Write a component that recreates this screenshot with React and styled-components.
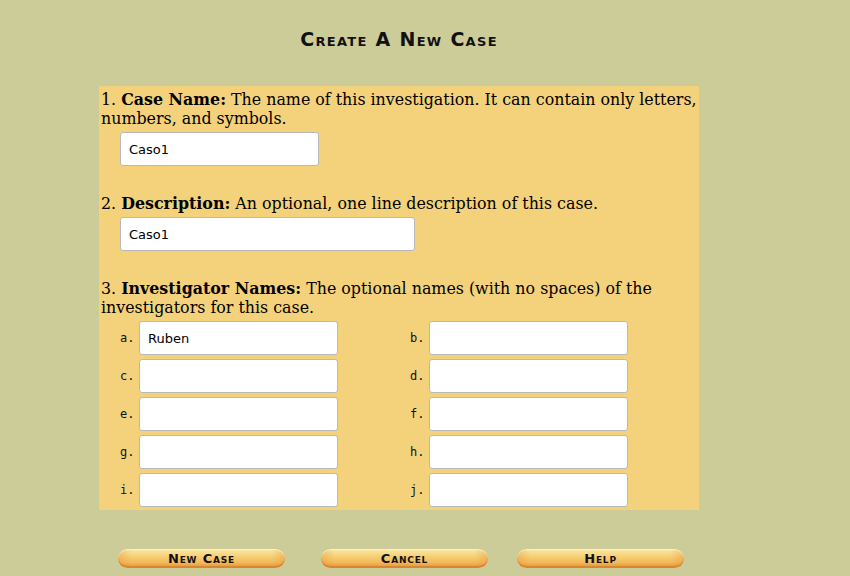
import React from 'react'
import styled, { createGlobalStyle } from 'styled-components'

const GlobalStyle = createGlobalStyle`
  html, body {
    margin: 0;
    padding: 0;
    background: #cccc99;
  }
  body {
    font-family: 'DejaVu Serif', serif;
  }
`

const Page = styled.div`
  width: 600px;
  margin-left: 99px;
  padding-top: 28px;
`

const Title = styled.h1`
  margin: 0 0 36px;
  text-align: center;
  font-family: 'DejaVu Sans', sans-serif;
  font-variant: small-caps;
  font-weight: bold;
  font-size: 19px;
  line-height: 22px;
  letter-spacing: 1.3px;
  color: #111;
`

const Panel = styled.div`
  background: #f4d27c;
  padding: 4px 0 3px 2px;
  font-size: 15.85px;
  line-height: 19px;
  color: #000;
`

const Section = styled.div`
  margin-bottom: ${p => p.gap || 0}px;
`

const Question = styled.p`
  margin: 0;
`

const Field = styled.input`
  display: block;
  box-sizing: border-box;
  width: ${p => p.w}px;
  height: 34px;
  margin: 4px 0 0 19px;
  padding: 0 8px;
  border: 1px solid #b9b9b9;
  border-radius: 3px;
  background: #fff;
  font-family: 'DejaVu Sans', sans-serif;
  font-size: 13px;
  color: #000;
`

const NameGrid = styled.div`
  display: grid;
  grid-template-columns: 290px 290px;
  row-gap: 4px;
  margin-top: 4px;
`

const NameCell = styled.label`
  display: flex;
  align-items: center;
  padding-left: 19px;
  font-family: 'DejaVu Sans Mono', monospace;
  font-size: 12px;
  color: #111;
`

const Letter = styled.span`
  width: 19px;
`

const NameInput = styled(Field)`
  margin: 0;
`

const ButtonRow = styled.div`
  display: grid;
  grid-template-columns: 205px 201px 191px;
  justify-items: center;
  margin-top: 39px;
`

const PillButton = styled.button`
  width: 167px;
  height: 19px;
  padding: 0;
  border: none;
  border-radius: 10px;
  background:
    linear-gradient(90deg, rgba(230, 140, 50, 0.35) 0%, rgba(230, 140, 50, 0) 8%, rgba(230, 140, 50, 0) 92%, rgba(230, 140, 50, 0.35) 100%),
    linear-gradient(#fbe9a8 0%, #f7d27a 35%, #f2bb5a 70%, #e58f33 100%);
  box-shadow: inset 0 -2px 0 #dc8530, inset 0 1px 0 #fff0bc;
  font-family: 'DejaVu Sans', sans-serif;
  font-variant: small-caps;
  font-weight: bold;
  font-size: 13px;
  line-height: 17px;
  letter-spacing: 0.8px;
  color: #111;
  cursor: pointer;
`

const letters = ['a', 'b', 'c', 'd', 'e', 'f', 'g', 'h', 'i', 'j']

export default function App() {
  return (
    <>
      <GlobalStyle />
      <Page>
        <Title>Create A New Case</Title>
        <Panel>
          <Section gap={28}>
            <Question>
              1. <b>Case Name:</b> The name of this investigation. It can contain only letters,
              numbers, and symbols.
            </Question>
            <Field w={199} defaultValue="Caso1" />
          </Section>
          <Section gap={28}>
            <Question>
              2. <b>Description:</b> An optional, one line description of this case.
            </Question>
            <Field w={295} defaultValue="Caso1" />
          </Section>
          <Section>
            <Question>
              3. <b>Investigator Names:</b> The optional names (with no spaces) of the
              investigators for this case.
            </Question>
            <NameGrid>
              {letters.map((l, i) => (
                <NameCell key={l}>
                  <Letter>{l}.</Letter>
                  <NameInput w={199} defaultValue={i === 0 ? 'Ruben' : ''} />
                </NameCell>
              ))}
            </NameGrid>
          </Section>
        </Panel>
        <ButtonRow>
          <PillButton>New Case</PillButton>
          <PillButton>Cancel</PillButton>
          <PillButton>Help</PillButton>
        </ButtonRow>
      </Page>
    </>
  )
}
